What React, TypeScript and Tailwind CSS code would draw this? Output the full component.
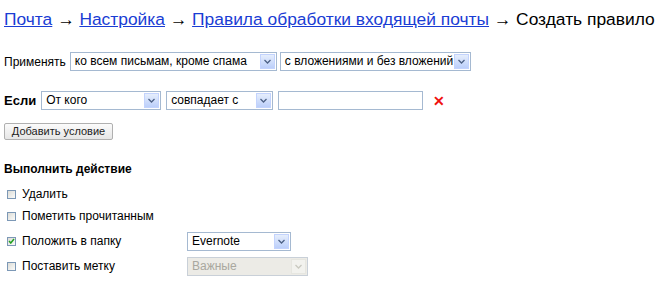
import React from 'react';

const font = { fontFamily: '"Liberation Sans", Arial, sans-serif' };

function Arrow({ disabled }: { disabled?: boolean }) {
  return (
    <div
      className={`flex h-full w-[15px] items-center justify-center border ${
        disabled ? 'border-[#e6e6e0] bg-[#f2f2ee]' : 'border-[#c3d3fd] bg-gradient-to-b from-[#e6eefc] to-[#bccffa]'
      }`}
    >
      <svg width="7" height="5" viewBox="0 0 7 5">
        <path d="M0.5 1 L3.5 4 L6.5 1" fill="none" stroke={disabled ? '#c9c9c0' : '#4d6185'} strokeWidth="1.3" />
      </svg>
    </div>
  );
}

function Select({ value, width, disabled }: { value: string; width: string; disabled?: boolean }) {
  return (
    <div
      className={`flex h-[19px] items-stretch border p-px ${
        disabled ? 'border-[#c9d0d8] bg-[#ecebe6] text-[#a9a89f]' : 'border-[#a5b9d1] bg-white text-black'
      } ${width}`}
    >
      <div className="flex-1 truncate pl-[3px] text-[12px] leading-[15px]">{value}</div>
      <Arrow disabled={disabled} />
    </div>
  );
}

function Checkbox({ checked }: { checked?: boolean }) {
  return (
    <div className="flex h-[9px] w-[9px] items-center justify-center border border-[#7c98b6] bg-gradient-to-br from-[#dcdcd7] to-[#fbfbf9]">
      {checked && (
        <svg width="7" height="6" viewBox="0 0 7 6">
          <path d="M1 3 L2.8 5 L6 1" fill="none" stroke="#21a121" strokeWidth="1.5" />
        </svg>
      )}
    </div>
  );
}

function ActionRow({ label, checked, children }: { label: string; checked?: boolean; children?: React.ReactNode }) {
  return (
    <div className="flex h-[19px] items-center">
      <div className="flex w-[183px] items-center gap-[6px] pl-[3px]">
        <Checkbox checked={checked} />
        <span className="text-[12px]">{label}</span>
      </div>
      {children}
    </div>
  );
}

export default function App() {
  return (
    <div className="h-[299px] w-[659px] bg-white px-[4px] pt-[7px] text-black" style={font}>
      <div className="text-[17.4px] leading-[24px] whitespace-nowrap">
        <a className="text-[#1a3dd4] underline">Почта</a> →{' '}
        <a className="text-[#1a3dd4] underline">Настройка</a> →{' '}
        <a className="text-[#1a3dd4] underline">Правила обработки входящей почты</a> → Создать правило
      </div>

      <div className="mt-[21px] flex items-center">
        <span className="mr-[4px] text-[12px]">Применять</span>
        <Select value="ко всем письмам, кроме спама" width="w-[207px]" />
        <div className="w-[3px]" />
        <Select value="с вложениями и без вложений" width="w-[191px]" />
      </div>

      <div className="mt-[20px] flex items-center">
        <span className="mr-[5px] text-[13px] font-bold">Если</span>
        <Select value="От кого" width="w-[120px]" />
        <div className="w-[5px]" />
        <Select value="совпадает с" width="w-[107px]" />
        <div className="w-[5px]" />
        <div className="h-[19px] w-[145px] border border-[#a5b9d1] bg-white" />
        <span className="ml-[10px] text-[14px] font-bold leading-none text-[#f01010]">✕</span>
      </div>

      <button className="mt-[12px] h-[17px] w-[109px] rounded-[2px] border border-[#b0b0b0] bg-gradient-to-b from-[#fbfbfb] to-[#e6e6e6] text-[11px] leading-[15px] text-[#222]">
        Добавить условие
      </button>

      <div className="mt-[18px] text-[12px] font-bold">Выполнить действие</div>

      <div className="mt-[7px] flex flex-col">
        <ActionRow label="Удалить" />
        <div className="h-[3px]" />
        <ActionRow label="Пометить прочитанным" />
        <div className="h-[6px]" />
        <ActionRow label="Положить в папку" checked>
          <Select value="Evernote" width="w-[104px]" />
        </ActionRow>
        <div className="h-[6px]" />
        <ActionRow label="Поставить метку">
          <Select value="Важные" width="w-[121px]" disabled />
        </ActionRow>
      </div>
    </div>
  );
}
